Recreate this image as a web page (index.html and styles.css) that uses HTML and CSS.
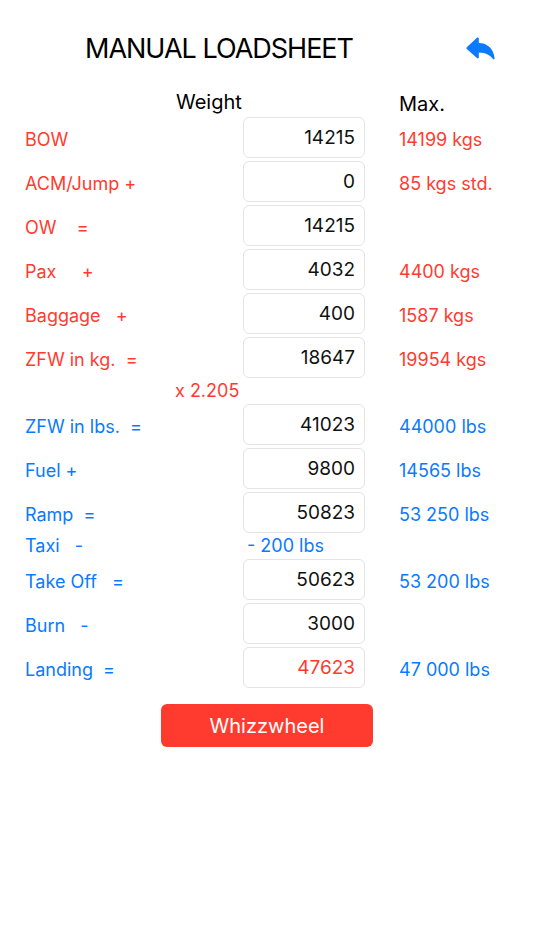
FILE: index.html
```html
<!DOCTYPE html>
<html lang="en">
<head>
    <meta charset="UTF-8">
    <meta name="viewport" content="width=device-width, initial-scale=1.0">
    <title>Manual Loadsheet</title>
    <link rel="stylesheet" href="styles.css">
</head>
<body>

    <div class="page">
        <div class="header">
            <h1>MANUAL LOADSHEET</h1>
            <button class="back" aria-label="Back">
                <svg width="30" height="24" viewBox="0 0 30 24">
                    <path d="M11.2 0.6 C11.9 0.2 12.8 0.7 12.8 1.6 L12.8 6.1 C21.5 6.3 27.6 11.8 28.6 21.2 C28.7 22.2 27.6 22.7 26.9 21.9 C23.9 18.2 19.4 15.7 12.8 15.6 L12.8 20.3 C12.8 21.2 11.9 21.7 11.2 21.3 L0.8 11.9 C0.3 11.5 0.3 10.6 0.8 10.2 Z" fill="#0a7aff"/>
                </svg>
            </button>
        </div>

        <div class="sheet">
            <div class="colhead weight">Weight</div>
            <div class="colhead max">Max.</div>

            <div class="label red">BOW</div>
            <input class="box" type="text" value="14215">
            <div class="limit red">14199 kgs</div>

            <div class="label red">ACM/Jump +</div>
            <input class="box" type="text" value="0">
            <div class="limit red">85 kgs std.</div>

            <div class="label red">OW &nbsp;&nbsp; =</div>
            <input class="box" type="text" value="14215">
            <div class="limit"></div>

            <div class="label red">Pax &nbsp;&nbsp;&nbsp; +</div>
            <input class="box" type="text" value="4032">
            <div class="limit red">4400 kgs</div>

            <div class="label red">Baggage &nbsp; +</div>
            <input class="box" type="text" value="400">
            <div class="limit red">1587 kgs</div>

            <div class="label red">ZFW in kg. &nbsp;=</div>
            <input class="box" type="text" value="18647">
            <div class="limit red">19954 kgs</div>

            <div class="note red factor">x 2.205</div>

            <div class="label blue">ZFW in lbs. &nbsp;=</div>
            <input class="box" type="text" value="41023">
            <div class="limit blue">44000 lbs</div>

            <div class="label blue">Fuel +</div>
            <input class="box" type="text" value="9800">
            <div class="limit blue">14565 lbs</div>

            <div class="label blue">Ramp &nbsp;=</div>
            <input class="box" type="text" value="50823">
            <div class="limit blue">53 250 lbs</div>

            <div class="label blue small">Taxi &nbsp; -</div>
            <div class="note blue taxi">- 200 lbs</div>

            <div class="label blue">Take Off &nbsp; =</div>
            <input class="box" type="text" value="50623">
            <div class="limit blue">53 200 lbs</div>

            <div class="label blue">Burn &nbsp; -</div>
            <input class="box" type="text" value="3000">
            <div class="limit"></div>

            <div class="label blue">Landing &nbsp;=</div>
            <input class="box over" type="text" value="47623">
            <div class="limit blue">47 000 lbs</div>
        </div>

        <button class="whizz">Whizzwheel</button>
    </div>

</body>
</html>
```

FILE: styles.css
```css
body {
    margin: 0;
    font-family: Inter, "Noto Sans", sans-serif;
    background-color: #ffffff;
    color: #000;
}
.page {
    width: 534px;
    padding-top: 30px;
}
.header {
    display: flex;
    align-items: center;
    padding-left: 85px;
    height: 36px;
}
.header h1 {
    margin: 0;
    font-size: 27px;
    font-weight: 400;
    letter-spacing: -1px;
    width: 381px;
}
.back {
    background: none;
    border: none;
    padding: 0;
    margin-top: 4px;
    cursor: pointer;
}
.sheet {
    display: grid;
    grid-template-columns: 184px 122px auto;
    column-gap: 34px;
    row-gap: 3px;
    padding-left: 25px;
    margin-top: 20px;
    align-items: center;
}
.colhead {
    font-size: 20px;
    height: 22px;
    padding-top: 2px;
}
.weight {
    grid-column: 1 / 3;
    padding-left: 151px;
}
.max {
    padding-top: 6px;
}
.label, .limit {
    font-size: 18px;
    padding-top: 3px;
}
.red {
    color: #ff3b30;
}
.blue {
    color: #0a7aff;
}
.box {
    box-sizing: border-box;
    width: 122px;
    height: 41px;
    border: 1px solid #e4e4e4;
    border-radius: 6px;
    text-align: right;
    padding: 0 9px 0 0;
    font-family: inherit;
    font-size: 19px;
    color: #111;
    background: #fff;
}
.box.over {
    color: #ff3b30;
}
.note {
    font-size: 18px;
    height: 20px;
    line-height: 20px;
}
.factor {
    grid-column: 1 / 4;
    padding-left: 150px;
}
.label.small {
    height: 20px;
    line-height: 20px;
    padding-top: 0;
}
.taxi {
    grid-column: 2 / 4;
    padding-left: 4px;
    padding-top: 0;
}
.whizz {
    display: block;
    margin: 16px auto 0;
    width: 212px;
    height: 43px;
    background-color: #ff3b30;
    color: #fff;
    border: none;
    border-radius: 6px;
    font-family: inherit;
    font-size: 20px;
    cursor: pointer;
}
```
